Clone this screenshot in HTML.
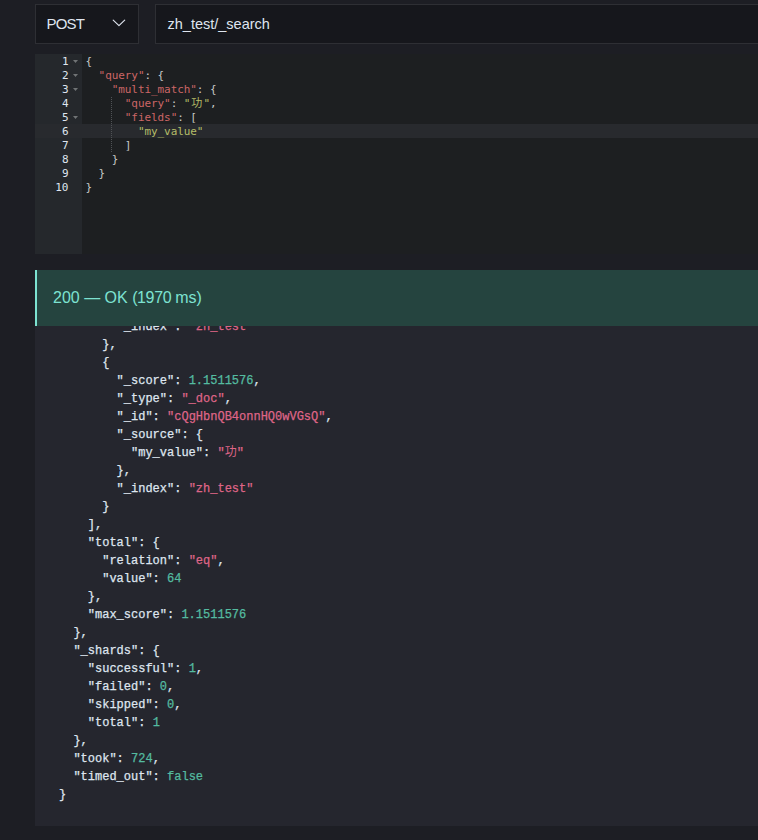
<!DOCTYPE html>
<html lang="en">
<head>
<meta charset="utf-8">
<title>REST</title>
<style>
html,body{margin:0;padding:0;}
body{width:758px;height:840px;overflow:hidden;background:#1d1e24;position:relative;
  font-family:"Liberation Sans","Noto Sans CJK SC",sans-serif;color:#dfe5ef;}
.abs{position:absolute;box-sizing:border-box;}
/* top controls */
.select{left:35px;top:4px;width:104px;height:40px;background:#16171c;border:1px solid #2e2f34;}
.select .lbl{position:absolute;left:10.5px;top:0;line-height:38px;font-size:15px;color:#dfe5ef;letter-spacing:-0.8px;}
.select svg{position:absolute;left:76px;top:14px;}
.input{left:155px;top:4px;width:640px;height:40px;background:#16171c;border:1px solid #2e2f34;}
.input .lbl{position:absolute;left:11.5px;top:0;line-height:38px;font-size:14.5px;color:#dfe5ef;}
/* ace editor */
.ace{left:35px;top:54px;width:723px;height:200px;background:#1d1f21;overflow:hidden;
  font-family:"DejaVu Sans Mono","Liberation Mono","Noto Sans CJK SC",monospace;font-size:11px;line-height:14px;color:#c5c8c6;}
.gutter{left:0;top:0;width:47px;height:200px;background:#25282c;color:#dfe5ef;}
.gl{position:relative;height:14px;line-height:16px;text-align:right;padding-right:13.5px;white-space:pre;}
.gl.fold:after{content:"";position:absolute;left:38px;top:6px;width:5px;height:3px;background:#707375;clip-path:polygon(0 0,100% 0,50% 100%);}
.gl.act{background:#282a2e;}
.content{left:47px;top:0;width:676px;height:200px;}
.ln{height:14px;line-height:16px;padding-left:3.5px;white-space:pre;letter-spacing:-0.075px;}
.cj{display:inline-block;width:13.1px;text-align:center;letter-spacing:0;}
.ln.act{background:#282a2e;}
.v{color:#cc6666;}
.s{color:#b5bd68;}
.guide{left:76px;top:42px;width:1px;height:56px;background-image:linear-gradient(to bottom,transparent 50%,#505356 50%);background-size:1px 2px;}
/* response */
.callout{left:35px;top:270px;width:723px;height:56px;background:#25443f;border-left:2px solid #7de2d1;}
.callout .lbl{position:absolute;left:16px;top:0;line-height:56px;font-size:16px;color:#7de2d1;white-space:pre;}
.resp{left:35px;top:326px;width:723px;height:500px;background:#25262e;overflow:hidden;}
.code{position:absolute;left:24px;top:-8px;margin:0;
  font-family:"Liberation Mono","Noto Sans CJK SC",monospace;font-size:12px;line-height:18px;color:#dfe5ef;white-space:pre;-webkit-text-stroke:0.25px;}
.code .p{color:#df6587;}
.code .zh{-webkit-text-stroke:0;}
.code .n{color:#54bba0;}
</style>
</head>
<body>
<div class="abs select"><span class="lbl">POST</span>
<svg width="14" height="9" viewBox="0 0 14 9"><path d="M1.2 1.1 L6.95 6.6 L12.7 1.1" fill="none" stroke="#dfe5ef" stroke-width="1.15" stroke-linecap="round" stroke-linejoin="round"/></svg>
</div>
<div class="abs input"><span class="lbl">zh_test/_search</span></div>

<div class="abs ace">
  <div class="abs gutter">
<div class="gl fold">1</div><div class="gl fold">2</div><div class="gl fold">3</div><div class="gl">4</div><div class="gl fold">5</div><div class="gl act">6</div><div class="gl">7</div><div class="gl">8</div><div class="gl">9</div><div class="gl">10</div>
  </div>
  <div class="abs content">
<div class="ln">{</div>
<div class="ln">  <span class="v">"query"</span>: {</div>
<div class="ln">    <span class="v">"multi_match"</span>: {</div>
<div class="ln">      <span class="v">"query"</span>: <span class="s">"<span class="cj">功</span>"</span>,</div>
<div class="ln">      <span class="v">"fields"</span>: [</div>
<div class="ln act">        <span class="s">"my_value"</span></div>
<div class="ln">      ]</div>
<div class="ln">    }</div>
<div class="ln">  }</div>
<div class="ln">}</div>
  </div>
  <div class="abs guide"></div>
</div>

<div class="abs callout"><span class="lbl">200 — OK <span style="letter-spacing:-0.38px">(1970 </span>ms)</span></div>
<div class="abs resp">
<pre class="code">        "_index": <span class="p">"zh_test"</span>
      },
      {
        "_score": <span class="n">1.1511576</span>,
        "_type": <span class="p">"_doc"</span>,
        "_id": <span class="p">"cQgHbnQB4onnHQ0wVGsQ"</span>,
        "_source": {
          "my_value": <span class="p">"<span class="zh">功</span>"</span>
        },
        "_index": <span class="p">"zh_test"</span>
      }
    ],
    "total": {
      "relation": <span class="p">"eq"</span>,
      "value": <span class="n">64</span>
    },
    "max_score": <span class="n">1.1511576</span>
  },
  "_shards": {
    "successful": <span class="n">1</span>,
    "failed": <span class="n">0</span>,
    "skipped": <span class="n">0</span>,
    "total": <span class="n">1</span>
  },
  "took": <span class="n">724</span>,
  "timed_out": <span class="n">false</span>
}</pre>
</div>
</body>
</html>
